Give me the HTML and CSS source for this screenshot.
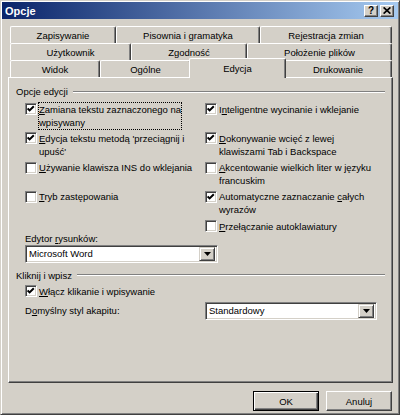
FILE: index.html
```html
<!DOCTYPE html>
<html lang="pl">
<head>
    <meta charset="UTF-8">
    <title>Opcje</title>
    <link rel="stylesheet" href="styles.css">
</head>
<body>

<div class="window">
    <div class="titlebar">
        <span class="title">Opcje</span>
        <div class="caption-buttons">
            <span class="cap-btn help">?</span>
            <span class="cap-btn close">
                <svg width="8" height="7" viewBox="0 0 8 7"><path d="M0.6 0.4 L7.4 6.6 M7.4 0.4 L0.6 6.6" stroke="#000" stroke-width="1.7" fill="none"/></svg>
            </span>
        </div>
    </div>

    <div class="client">
        <div class="tabs">
            <div class="tab-row row1">
                <div class="tab">Zapisywanie</div>
                <div class="tab">Pisownia i gramatyka</div>
                <div class="tab">Rejestracja zmian</div>
            </div>
            <div class="tab-row row2">
                <div class="tab">Użytkownik</div>
                <div class="tab">Zgodność</div>
                <div class="tab">Położenie plików</div>
            </div>
            <div class="tab-row row3">
                <div class="tab">Widok</div>
                <div class="tab">Ogólne</div>
                <div class="tab active">Edycja</div>
                <div class="tab">Drukowanie</div>
            </div>
        </div>

        <div class="panel">
            <div class="group-title">Opcje edycji</div>

            <div class="options">
                <label class="check">
                    <span class="box on"><svg width="8" height="8" viewBox="0 0 8 8"><path d="M0.6 3.4 L2.6 5.4 L6.8 1.2" stroke="#000" stroke-width="2" fill="none"/></svg></span>
                    <span class="text focus"><u>Z</u>amiana tekstu zaznaczonego na<br>wpisywany</span>
                </label>
                <label class="check">
                    <span class="box on"><svg width="8" height="8" viewBox="0 0 8 8"><path d="M0.6 3.4 L2.6 5.4 L6.8 1.2" stroke="#000" stroke-width="2" fill="none"/></svg></span>
                    <span class="text">I<u>n</u>teligentne wycinanie i wklejanie</span>
                </label>

                <label class="check">
                    <span class="box on"><svg width="8" height="8" viewBox="0 0 8 8"><path d="M0.6 3.4 L2.6 5.4 L6.8 1.2" stroke="#000" stroke-width="2" fill="none"/></svg></span>
                    <span class="text"><u>E</u>dycja tekstu metodą 'przeciągnij i<br>upuść'</span>
                </label>
                <label class="check">
                    <span class="box on"><svg width="8" height="8" viewBox="0 0 8 8"><path d="M0.6 3.4 L2.6 5.4 L6.8 1.2" stroke="#000" stroke-width="2" fill="none"/></svg></span>
                    <span class="text"><u>D</u>okonywanie wcięć z lewej<br>klawiszami Tab i Backspace</span>
                </label>

                <label class="check">
                    <span class="box"></span>
                    <span class="text"><u>U</u>żywanie klawisza INS do wklejania</span>
                </label>
                <label class="check">
                    <span class="box"></span>
                    <span class="text"><u>A</u>kcentowanie wielkich liter w języku<br>francuskim</span>
                </label>

                <label class="check">
                    <span class="box"></span>
                    <span class="text"><u>T</u>ryb zastępowania</span>
                </label>
                <label class="check">
                    <span class="box on"><svg width="8" height="8" viewBox="0 0 8 8"><path d="M0.6 3.4 L2.6 5.4 L6.8 1.2" stroke="#000" stroke-width="2" fill="none"/></svg></span>
                    <span class="text">Automatyczne zaznaczanie <u>c</u>ałych<br>wyrazów</span>
                </label>

                <div class="editor">
                    <div class="field-label">Edytor <u>r</u>ysunków:</div>
                    <div class="combo wide">
                        <span class="value">Microsoft Word</span>
                        <span class="drop"><svg width="7" height="4" viewBox="0 0 7 4"><path d="M0 0 H7 L3.5 4 Z" fill="#000"/></svg></span>
                    </div>
                </div>
                <label class="check">
                    <span class="box"></span>
                    <span class="text"><u>P</u>rzełączanie autoklawiatury</span>
                </label>
            </div>

            <div class="group-title second">Kliknij i wpisz</div>

            <label class="check single">
                <span class="box on"><svg width="8" height="8" viewBox="0 0 8 8"><path d="M0.6 3.4 L2.6 5.4 L6.8 1.2" stroke="#000" stroke-width="2" fill="none"/></svg></span>
                <span class="text"><u>W</u>łącz klikanie i wpisywanie</span>
            </label>

            <div class="style-row">
                <span class="field-label">D<u>o</u>myślny styl akapitu:</span>
                <div class="combo">
                    <span class="value">Standardowy</span>
                    <span class="drop"><svg width="7" height="4" viewBox="0 0 7 4"><path d="M0 0 H7 L3.5 4 Z" fill="#000"/></svg></span>
                </div>
            </div>
        </div>

        <div class="actions">
            <button class="btn default">OK</button>
            <button class="btn">Anuluj</button>
        </div>
    </div>
</div>

</body>
</html>
```

FILE: styles.css
```css
body {
    margin: 0;
    background-color: #d4d0c8;
    font-family: "Liberation Sans", Arial, sans-serif;
    font-size: 9.5px;
    color: #000;
}

/* Ramka okna w stylu Windows Classic */
.window {
    width: 400px;
    height: 415px;
    box-sizing: border-box;
    background-color: #d4d0c8;
    border: 1px solid;
    border-color: #d4d0c8 #404040 #404040 #d4d0c8;
    box-shadow: inset 1px 1px #fff, inset -1px -1px #808080;
    padding: 1px;
}

.titlebar {
    height: 17px;
    display: flex;
    align-items: center;
    justify-content: space-between;
    padding: 0 4px 0 3px;
    background: linear-gradient(to right, #0a246a, #a6caf0);
}
.title {
    color: #fff;
    font-weight: bold;
    font-size: 11px;
}
.caption-buttons {
    display: flex;
    gap: 2px;
}
.cap-btn {
    width: 14px;
    height: 12px;
    box-sizing: border-box;
    display: flex;
    align-items: center;
    justify-content: center;
    background-color: #d4d0c8;
    border: 1px solid;
    border-color: #fff #404040 #404040 #fff;
    box-shadow: inset -1px -1px #808080;
}
.cap-btn.help {
    font-weight: bold;
    font-size: 10px;
    line-height: 10px;
}

.client {
    padding: 7px 5px 0 6px;
}

/* Zakładki */
.tabs {
    margin: 0 1px 0 2px;
}
.tab-row {
    display: grid;
    height: 17px;
}
.row1 { grid-template-columns: 106px 144px 1fr; }
.row2 { grid-template-columns: 121px 116px 1fr; }
.row3 { grid-template-columns: 90px 91px 93px 1fr; }

.tab {
    box-sizing: border-box;
    display: flex;
    align-items: center;
    justify-content: center;
    background-color: #d4d0c8;
    border-top: 1px solid #fff;
    border-left: 1px solid #fff;
    border-right: 1px solid #404040;
    box-shadow: inset -1px 0 #808080;
    border-radius: 2px 2px 0 0;
    white-space: nowrap;
}
.tab.active {
    position: relative;
    z-index: 1;
    margin: -2px -2px -1px;
    padding-bottom: 1px;
}

.panel {
    height: 306px;
    box-sizing: border-box;
    border: 1px solid;
    border-color: #fff #404040 #404040 #fff;
    box-shadow: inset -1px -1px #808080;
    padding: 7px 7px 0 7px;
}

.group-title {
    display: flex;
    align-items: center;
    line-height: 13px;
}
.group-title::after {
    content: "";
    flex: 1;
    margin-left: 5px;
    border-top: 1px solid #808080;
    border-bottom: 1px solid #fff;
}
.group-title.second {
    margin-top: 6px;
}

.options {
    display: grid;
    grid-template-columns: 180px 1fr;
    margin: 4.5px 0 0 9px;
}

.check {
    display: flex;
    align-items: flex-start;
    min-height: 29.25px;
    line-height: 13px;
    white-space: nowrap;
}
.check.single {
    min-height: 0;
    margin: 3px 0 0 9px;
}
.box {
    flex: none;
    width: 12px;
    height: 12px;
    box-sizing: border-box;
    margin: 0.5px 2px 0 0;
    display: flex;
    align-items: center;
    justify-content: center;
    background-color: #fff;
    border: 1px solid;
    border-color: #808080 #fff #fff #808080;
    box-shadow: inset 1px 1px #404040, inset -1px -1px #d4d0c8;
}
.text.focus {
    outline: 1px dotted #000;
    outline-offset: 0;
}

.editor {
    margin-top: 12px;
}
.field-label {
    line-height: 13px;
    white-space: nowrap;
}

/* Lista rozwijana */
.combo {
    width: 172px;
    height: 18px;
    box-sizing: border-box;
    display: flex;
    align-items: center;
    padding: 2px;
    background-color: #fff;
    border: 1px solid;
    border-color: #808080 #fff #fff #808080;
    box-shadow: inset 1px 1px #404040, inset -1px -1px #d4d0c8;
}
.combo.wide {
    width: 193px;
}
.combo .value {
    flex: 1;
    padding-left: 1px;
}
.drop {
    width: 16px;
    height: 14px;
    box-sizing: border-box;
    display: flex;
    align-items: center;
    justify-content: center;
    background-color: #d4d0c8;
    border: 1px solid;
    border-color: #d4d0c8 #404040 #404040 #d4d0c8;
    box-shadow: inset 1px 1px #fff, inset -1px -1px #808080;
}

.style-row {
    display: grid;
    grid-template-columns: 180px 172px;
    align-items: center;
    margin: 4px 0 0 9px;
}

/* Przyciski */
.actions {
    display: flex;
    justify-content: flex-end;
    gap: 7px;
    margin: 8px 1px 0 0;
}
.btn {
    width: 66px;
    height: 20px;
    padding: 0;
    font: inherit;
    color: #000;
    background-color: #d4d0c8;
    border: 1px solid;
    border-color: #fff #404040 #404040 #fff;
    box-shadow: inset -1px -1px #808080;
}
.btn.default {
    border-color: #000;
    box-shadow: inset 1px 1px #fff, inset -1px -1px #404040, inset -2px -2px #808080;
}
```
